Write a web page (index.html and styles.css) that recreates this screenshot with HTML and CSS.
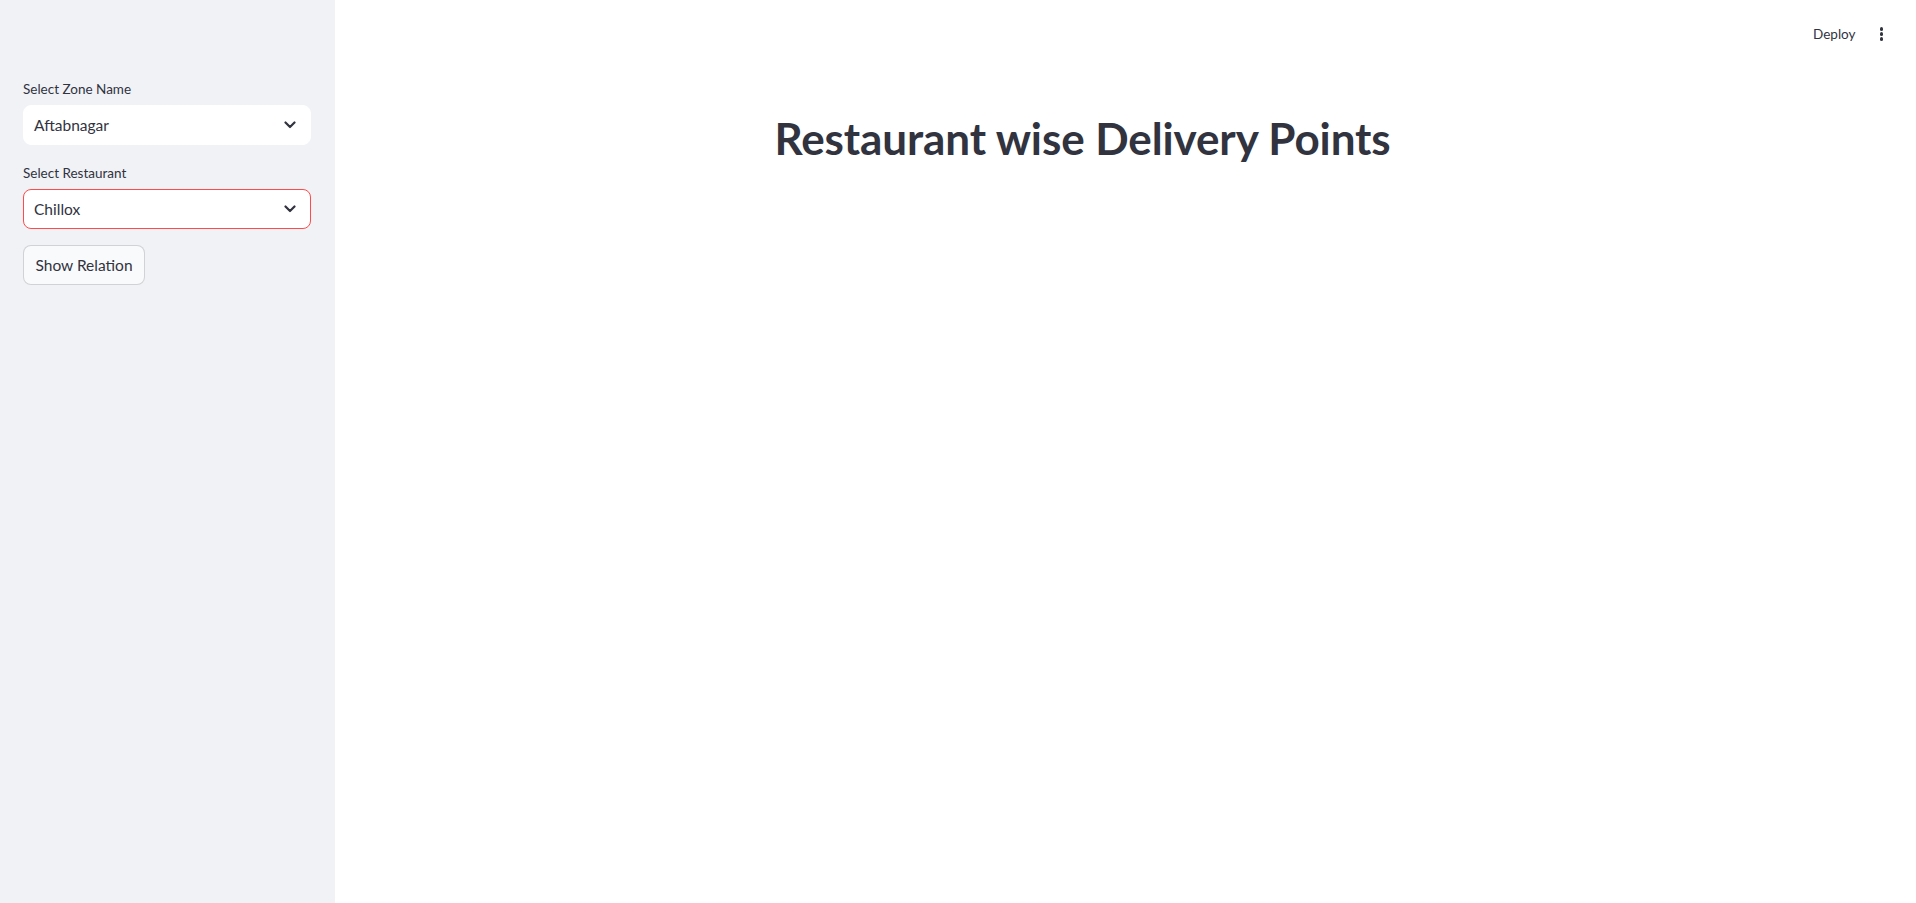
FILE: index.html
```html
<!DOCTYPE html>
<html lang="en">
<head>
<meta charset="utf-8">
<title>Restaurant wise Delivery Points</title>
<link rel="stylesheet" href="styles.css">
</head>
<body>
<div class="app">
  <aside class="sidebar">
    <div class="field">
      <label class="label">Select Zone Name</label>
      <div class="select">
        <span class="value">Aftabnagar</span>
        <svg class="chev" width="12" height="8" viewBox="0 0 12 8"><path d="M1.5 1.5 L6 6 L10.5 1.5" fill="none" stroke="#31333F" stroke-width="2.2" stroke-linecap="round" stroke-linejoin="round"/></svg>
      </div>
    </div>
    <div class="field">
      <label class="label">Select Restaurant</label>
      <div class="select focused">
        <span class="value">Chillox</span>
        <svg class="chev" width="12" height="8" viewBox="0 0 12 8"><path d="M1.5 1.5 L6 6 L10.5 1.5" fill="none" stroke="#31333F" stroke-width="2.2" stroke-linecap="round" stroke-linejoin="round"/></svg>
      </div>
    </div>
    <button class="btn">Show Relation</button>
  </aside>
  <main class="main">
    <header class="topbar">
      <span class="deploy">Deploy</span>
      <span class="menu"><i></i><i></i><i></i></span>
    </header>
    <div class="block">
      <h1 class="title">Restaurant wise Delivery Points</h1>
    </div>
  </main>
</div>
</body>
</html>
```
FILE: styles.css
```css
html, body {
  margin: 0;
  padding: 0;
  height: 100%;
  background: #ffffff;
  color: #31333F;
  font-family: "Lato", "Noto Sans", sans-serif;
}
.app {
  display: flex;
  height: 100%;
}
.sidebar {
  width: 335px;
  flex: none;
  box-sizing: border-box;
  background: #f0f2f6;
  padding: 77px 24px 0 23px;
  display: flex;
  flex-direction: column;
  gap: 16px;
}
.field {
  display: flex;
  flex-direction: column;
}
.label {
  font-size: 13.5px;
  line-height: 24px;
  height: 24px;
  margin-bottom: 4px;
  color: #31333F;
}
.select {
  height: 40px;
  box-sizing: border-box;
  background: #ffffff;
  border: 1px solid #ffffff;
  border-radius: 8px;
  display: flex;
  align-items: center;
  justify-content: space-between;
  padding: 0 14px 0 10px;
  font-size: 15.5px;
}
.select.focused {
  border-color: #ff4b4b;
}
.chev {
  display: block;
}
.btn {
  align-self: flex-start;
  height: 40px;
  width: 122px;
  box-sizing: border-box;
  background: #f9fafb;
  border: 1px solid rgba(49, 51, 63, 0.2);
  border-radius: 8px;
  font-family: inherit;
  font-size: 15.5px;
  color: #31333F;
  padding: 0 10px;
}
.main {
  flex: 1;
  display: flex;
  flex-direction: column;
}
.topbar {
  height: 60px;
  display: flex;
  align-items: center;
  justify-content: flex-end;
  padding-right: 33px;
  padding-top: 8px;
  gap: 24px;
  box-sizing: border-box;
}
.deploy {
  font-size: 13.5px;
  color: #31333F;
}
.menu {
  display: flex;
  flex-direction: column;
  gap: 1.5px;
}
.menu i {
  width: 3.5px;
  height: 3.5px;
  border-radius: 50%;
  background: #31333F;
  display: block;
}
.block {
  width: 736px;
  margin: 0 auto;
  padding-top: 52px;
}
.title {
  margin: 0;
  font-size: 44px;
  font-weight: 700;
  line-height: 1.2;
  text-align: center;
  padding-right: 86px;
  letter-spacing: -0.1px;
}
```
